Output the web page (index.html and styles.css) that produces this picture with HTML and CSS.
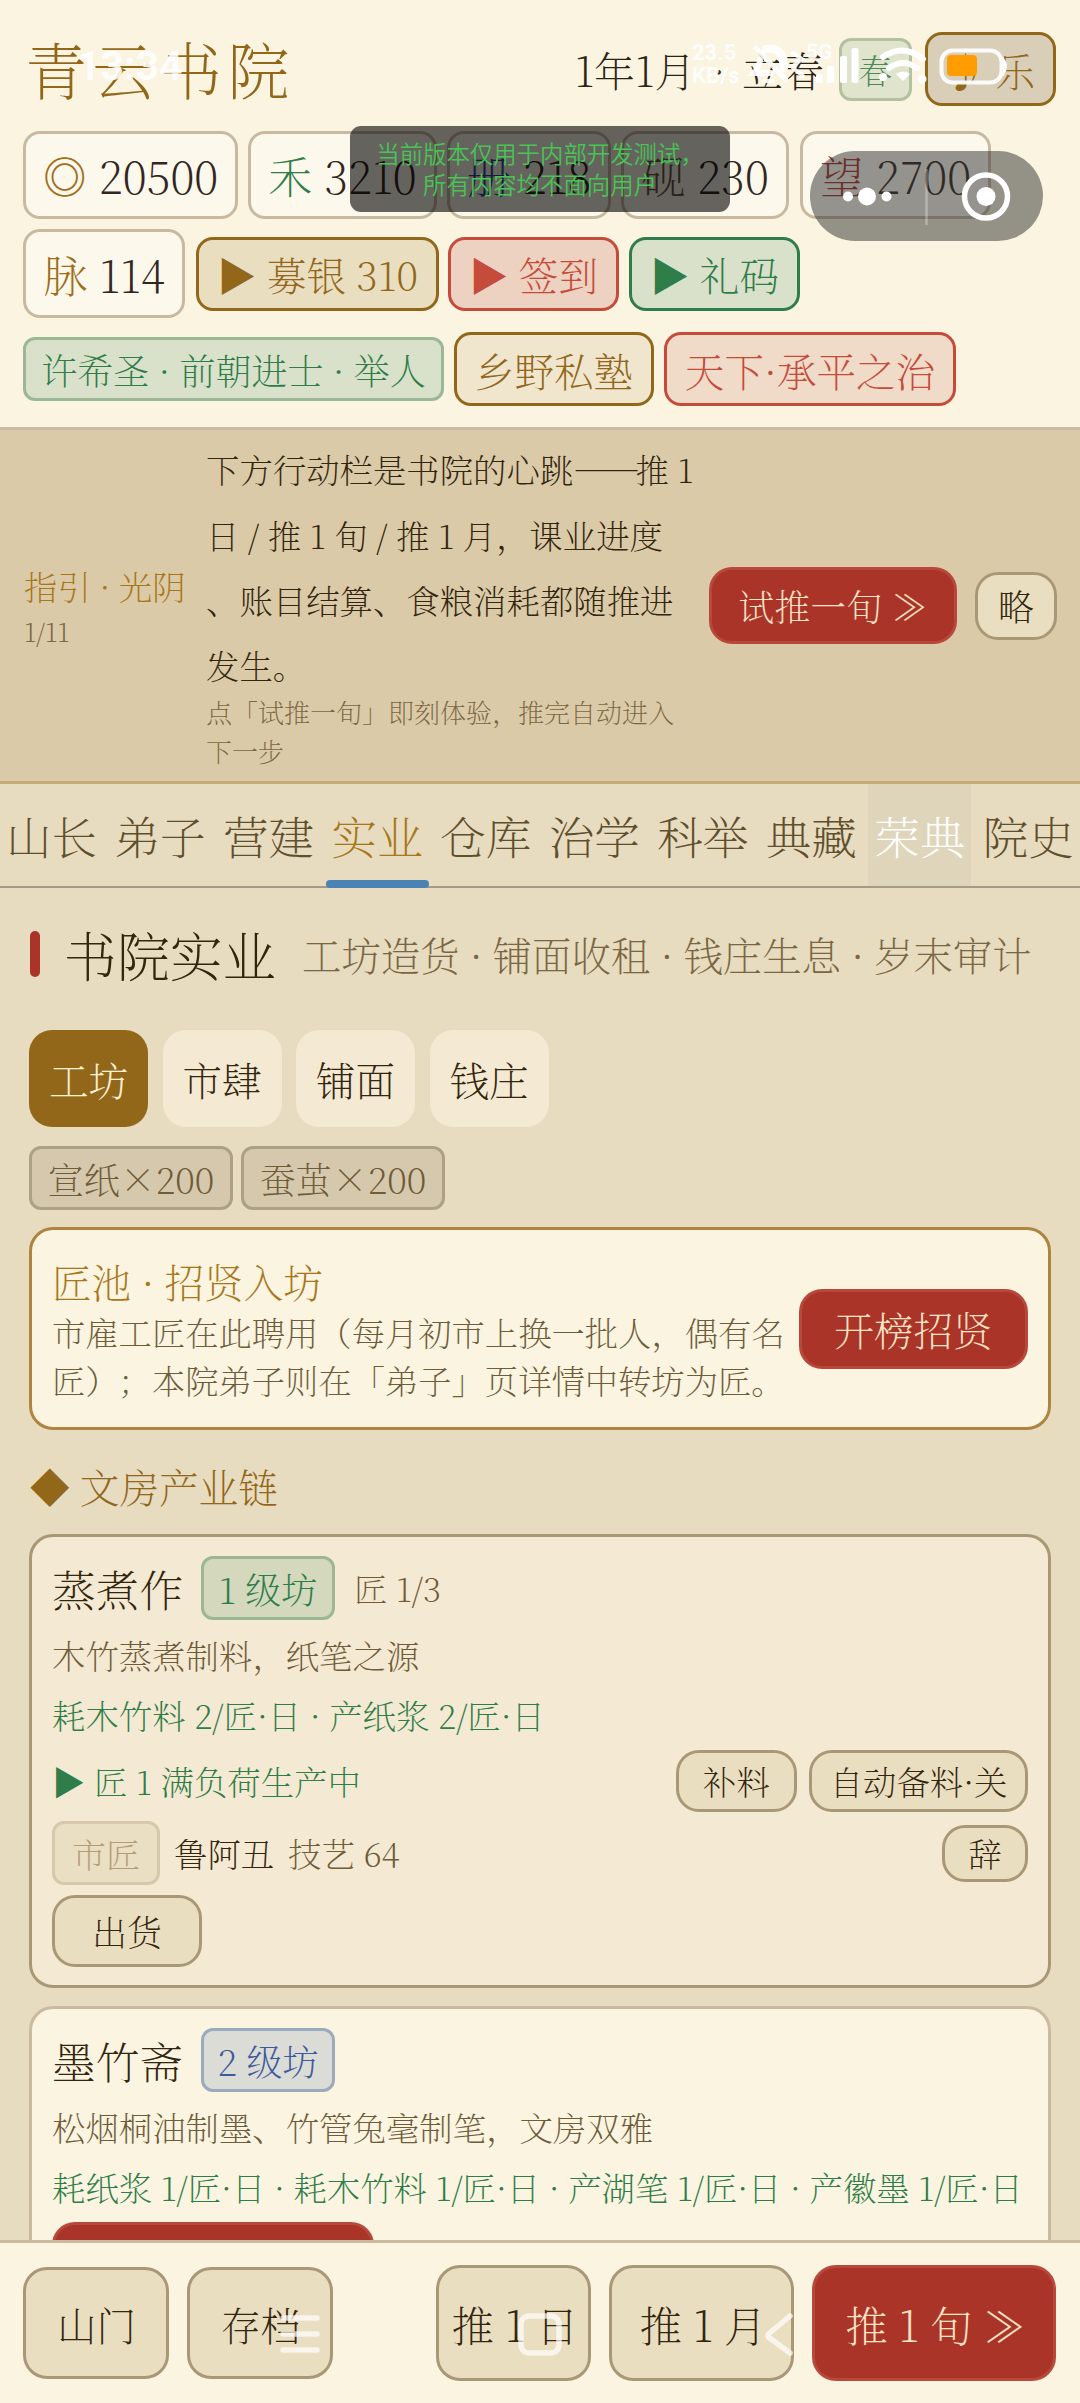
FILE: index.html
```html
<!DOCTYPE html>
<html lang="zh-CN">
<head>
<meta charset="utf-8">
<title>青云书院</title>
<link rel="stylesheet" href="styles.css">
</head>
<body>
<div class="app">
  <header class="header">
    <div class="title-row">
      <h1 class="title">青云书院</h1>
      <span class="date">1年1月 · 立春</span>
      <span class="season">春</span>
      <button class="action music">♪ 乐</button>
    </div>
    <div class="stats">
      <span class="stat stat-coin"><i class="c-gold">◎</i> 20500</span>
      <span class="stat stat-food"><i class="c-green">禾</i> 3210</span>
      <span class="stat stat-book"><i class="c-blue">册</i> 218</span>
      <span class="stat stat-ink"><i class="c-brown">砚</i> 230</span>
      <span class="stat stat-fame"><i class="c-red">望</i> 2700</span>
    </div>
    <div class="stats second">
      <span class="stat stat-vein"><i class="c-gold">脉</i> 114</span>
      <button class="action gold raise">▶ 募银 310</button>
      <button class="action red sign">▶ 签到</button>
      <button class="action green gift">▶ 礼码</button>
    </div>
    <div class="badges">
      <span class="tag tag-green master">许希圣 · 前朝进士 · 举人</span>
      <button class="action pale school">乡野私塾</button>
      <button class="action rose realm">天下·承平之治</button>
    </div>
  </header>

  <section class="guide">
    <div class="guide-label">指引 · 光阴<small>1/11</small></div>
    <div class="guide-text">
      <p>下方行动栏是书院的心跳<span class="dash">——</span>推 1<br>日 / 推 1 旬 / 推 1 月，课业进度<br>、账目结算、食粮消耗都随推进<br>发生。</p>
      <small>点「试推一旬」即刻体验，推完自动进入<br>下一步</small>
    </div>
    <button class="btn primary try">试推一旬 ≫</button>
    <button class="btn skip">略</button>
  </section>

  <nav class="tabs">
    <a>山长</a><a>弟子</a><a>营建</a><a class="active">实业</a><a>仓库</a><a>治学</a><a>科举</a><a>典藏</a><a class="pressed">荣典</a><a>院史</a>
  </nav>

  <main class="main">
    <div class="section-head"><span class="bar"></span><h2>书院实业</h2><span class="sub">工坊造货 · 铺面收租 · 钱庄生息 · 岁末审计</span></div>
    <div class="pills"><span class="pill on">工坊</span><span class="pill">市肆</span><span class="pill">铺面</span><span class="pill">钱庄</span></div>
    <div class="stock"><span class="tag tag-grey">宣纸×200</span><span class="tag tag-grey">蚕茧×200</span></div>

    <article class="card hire">
      <div class="hire-text">
        <h3>匠池 · 招贤入坊</h3>
        <p>市雇工匠在此聘用（每月初市上换一批人，偶有名<br>匠）；本院弟子则在「弟子」页详情中转坊为匠。</p>
      </div>
      <button class="btn primary post">开榜招贤</button>
    </article>

    <h3 class="chain">◆ 文房产业链</h3>

    <article class="card shop active-shop">
      <div class="shop-head"><h3>蒸煮作</h3><span class="tag tag-green level">1 级坊</span><span class="crew">匠 1/3</span></div>
      <p class="desc">木竹蒸煮制料，纸笔之源</p>
      <p class="flow">耗木竹料 2/匠·日 · 产纸浆 2/匠·日</p>
      <div class="row produce"><span class="flow-state">▶ 匠 1 满负荷生产中</span><button class="btn refill">补料</button><button class="btn auto">自动备料·关</button></div>
      <div class="row worker"><span class="tag tag-faint">市匠</span><span class="name">鲁阿丑</span><span class="skill">技艺 64</span><button class="btn dismiss">辞</button></div>
      <button class="btn ship">出货</button>
    </article>

    <article class="card shop">
      <div class="shop-head"><h3>墨竹斋</h3><span class="tag tag-blue level">2 级坊</span></div>
      <p class="desc">松烟桐油制墨、竹管兔毫制笔，文房双雅</p>
      <p class="flow">耗纸浆 1/匠·日 · 耗木竹料 1/匠·日 · 产湖笔 1/匠·日 · 产徽墨 1/匠·日</p>
      <button class="btn primary build"></button>
    </article>
  </main>

  <footer class="footer">
    <button class="btn gate">山门</button>
    <button class="btn gate save">存档</button>
    <button class="btn day">推 1 日</button>
    <button class="btn month">推 1 月</button>
    <button class="btn primary ten">推 1 旬 ≫</button>
  </footer>
</div>

<div class="notice">当前版本仅用于内部开发测试，<br>所有内容均不面向用户</div>

<svg class="capsule" width="233" height="90" viewBox="0 0 233 90">
  <rect width="233" height="90" rx="45" fill="#2d2d2d" fill-opacity=".5"/>
  <g fill="#fff"><circle cx="38" cy="45.500" r="5"/><circle cx="57" cy="45.500" r="9"/><circle cx="76.500" cy="45.500" r="5"/><circle cx="176" cy="45.500" r="9.500"/></g>
  <path d="M116.500 18v56" stroke="#fff" stroke-opacity=".3" stroke-width="2.500"/>
  <circle cx="176" cy="45.500" r="21.500" fill="none" stroke="#fff" stroke-width="5.500"/>
</svg>

<span class="clock">13:34</span>
<span class="speed">23.5<br>KB/s</span>
<svg class="status" width="380" height="60" viewBox="0 0 380 60">
  <g fill="none" stroke="#fff" stroke-opacity=".9" stroke-linecap="round">
    <path d="M76 8l30 32" stroke-width="5"/>
    <path d="M86 9q14-2 17 10l1 9" stroke-width="8"/>
    <path d="M80 20q-1 8-6 13h17" stroke-width="6"/>
    <path d="M84 41h9" stroke-width="4"/>
    <path d="M113 13l9 6-9 7M113 28l10 8" stroke-width="4"/>
  </g>
  <g fill="#fff"><rect x="136" y="34" width="7" height="9" rx="2"/><rect x="147" y="26" width="7" height="17" rx="2"/><rect x="160" y="16" width="7" height="27" rx="2"/><rect x="171.500" y="8" width="7" height="35" rx="2"/></g>
  <g fill="none" stroke="#fff" stroke-width="6" stroke-linecap="round"><path d="M203 17q20-14 40 2M209 28q14-10 28 0"/></g>
  <path d="M223 41l-7-7q7-5 14 0z" fill="#fff"/>
  <circle cx="203" cy="37" r="4" fill="#fff"/><circle cx="242" cy="39" r="4.500" fill="#fff"/>
  <rect x="261.500" y="10.500" width="60" height="32" rx="11" fill="none" stroke="#fff" stroke-opacity=".92" stroke-width="4"/>
  <path d="M324 20q4 6 0 13z" fill="#fff" stroke="#fff" stroke-width="2"/>
  <rect x="267" y="15" width="30" height="21" rx="4" fill="#ff9d00"/>
</svg>
<span class="net">5G</span>

<svg class="keys" width="540" height="60" viewBox="0 0 540 60">
  <g fill="none" stroke="#fff" stroke-opacity=".7" stroke-width="5.500" stroke-linecap="round" stroke-linejoin="round">
    <path d="M23 18h34M23 34h34M23 50h34"/>
    <rect x="261" y="16" width="38" height="37" rx="8"/>
    <path d="M530 16l-21 17.500q-2 2 0 4L530 53"/>
  </g>
</svg>
</body>
</html>
```
FILE: styles.css
```css
* { box-sizing: border-box; margin: 0; padding: 0; }

body {
  width: 1080px;
  height: 2403px;
  overflow: hidden;
  position: relative;
  background: #e7dbc0;
  color: #33260f;
  font-family: "Noto Serif CJK SC", "Noto Sans CJK SC", serif;
  font-weight: 200;
  text-spacing-trim: space-all;
}

i { font-style: normal; }
h1, h2, h3, small, button { font: inherit; color: inherit; }
button { background: none; border: 0; white-space: nowrap; }

.app { display: flex; flex-direction: column; height: 2403px; }

/* header */
.header {
  height: 430px;
  padding: 32px 23px 0;
  background: #faf4e1;
  border-bottom: 3px solid #c9baa0;
  white-space: nowrap;
}
.title-row { display: flex; align-items: center; height: 74px; padding-right: 1px; }
.title { font-size: 62px; letter-spacing: 5.5px; line-height: 74px; color: #93671a; padding-left: 2px; }
.date { margin-left: auto; font-size: 41px; word-spacing: 6px; color: #2b2416; }
.season {
  width: 73px; height: 63px; margin: 0 13px 0 15px;
  display: grid; place-items: center;
  font-size: 34px; color: #4d8a57;
  background: #e1e4cd; border: 3px solid #b3c1a0; border-radius: 12px;
}
.action {
  height: 74px;
  display: grid; place-items: center;
  font-size: 39.600px;
  border: 3px solid; border-radius: 17px;
}
.music { width: 131px; color: #93671a; background: #d9cfb8; }

.stats { display: flex; gap: 10px; height: 88px; margin-top: 25px; }
.stats.second { height: 89px; margin-top: 10px; align-items: center; }
.stat {
  height: 100%;
  display: flex; align-items: center; justify-content: center; gap: 12px;
  font-size: 44px; color: #33261f;
  background: #fcf8ec; border: 3px solid #c8b9a0; border-radius: 17px;
}
.stat-coin { width: 215px; }
.stat-food { width: 189px; }
.stat-book { width: 164px; }
.stat-ink { width: 168px; }
.stat-fame { width: 191px; margin-left: 1px; }
.stat-vein { width: 162px; }
.c-gold { color: #a06d18; }
.c-green { color: #2f7d48; }
.c-blue { color: #2e4a94; }
.c-brown { color: #6b5444; }
.c-red { color: #a8322a; }

.gold { color: #93671a; background: #e9dec0; }
.red { color: #c54b3b; background: #edd2c1; }
.green { color: #2f7d48; background: #dae1cb; }
.pale { color: #93671a; background: #f0e5cd; }
.rose { color: #c54b3b; background: #f0dac8; }
.raise { width: 243px; margin-left: 1px; }
.sign { width: 171px; margin-left: -1px; }
.gift { width: 171px; }

.badges { display: flex; align-items: center; gap: 10px; height: 74px; margin-top: 14px; }
.school { width: 200px; }
.realm { width: 292px; }
.tag {
  display: grid; place-items: center;
  height: 64px;
  font-size: 36px;
  border: 3px solid; border-radius: 12px;
  white-space: nowrap;
}
.tag-green { color: #2f7d48; background: #dae1cb; border-color: #9bb796; }
.master { width: 421px; font-size: 36px; }

/* tutorial strip */
.guide {
  height: 354px;
  display: flex; align-items: center;
  padding: 0 23px;
  background: #dbcaa8;
  border-bottom: 3px solid #c4ab79;
  white-space: nowrap;
}
.guide-label { width: 183px; padding: 2px 0 0 1px; font-size: 33.400px; line-height: 48px; color: #a87719; }
.guide-label small { display: block; font-size: 26px; line-height: 42px; color: #7a6742; }
.guide-text { width: 503px; padding-bottom: 4px; font-size: 33.400px; line-height: 65.300px; }
.guide-text small { display: block; margin-top: -7px; font-size: 26px; line-height: 39px; color: #7a6742; }
.dash { letter-spacing: -4.700px; }

.btn {
  display: grid; place-items: center;
  background: #eadec1;
  border: 3px solid #a99876;
  border-radius: 23px;
}
.primary { background: #ab3429; border-color: #b8483c; color: #fbe3c6; }
.try { width: 248px; height: 77px; font-size: 36px; }
.skip { width: 82px; height: 68px; margin-left: 18px; font-size: 36px; }

/* tabs */
.tabs {
  height: 104px;
  display: flex; justify-content: space-between;
  border-bottom: 2px solid #a59a85;
}
.tabs a {
  position: relative;
  width: 103px;
  line-height: 104px;
  text-align: center;
  font-size: 45.600px;
  color: #5f4f2b;
  white-space: nowrap;
}
.tabs .active { color: #a87719; }
.tabs .active::after {
  content: "";
  position: absolute; left: 0; right: 0; bottom: -2px;
  height: 8px;
  background: #4b82b4; border-radius: 4px;
}
.tabs .pressed { color: #fff; background: #dfd5bb; }

/* main */
.main { height: 1352px; overflow: hidden; padding: 0 29px; }
.section-head { display: flex; align-items: center; height: 76px; margin-top: 28px; white-space: nowrap; }
.bar { width: 10px; height: 46px; margin: 0 24px 0 1px; border-radius: 5px; background: #ab3429; }
.section-head h2 { width: 238px; font-size: 52.900px; }
.sub { font-size: 39.400px; color: #7a6742; }

.pills { display: flex; gap: 14.500px; margin-top: 38px; }
.pill {
  width: 119px; height: 97px;
  display: grid; place-items: center;
  font-size: 39.600px;
  background: #f4e9d2; border-radius: 23px;
}
.pill.on { background: #93671a; color: #fdf1d6; }

.stock { display: flex; gap: 8px; margin-top: 19px; }
.tag-grey { width: 204px; color: #6f5c39; background: #d6c8ac; border-color: #ada083; }

.card { border: 3px solid #c9baa0; border-radius: 24px; background: #faf4e1; }
.hire {
  display: flex; align-items: center; justify-content: space-between;
  height: 203px; margin-top: 17px; padding: 0 20px;
  border-color: #ad8541;
}
.hire-text { white-space: nowrap; }
.hire h3 { font-size: 39.600px; line-height: 54px; color: #a87719; }
.hire p { font-size: 33.300px; line-height: 48px; color: #6f5c39; }
.post { width: 229px; height: 80px; font-size: 39.600px; }

.chain { height: 104px; line-height: 112px; padding-left: 1px; font-size: 39.600px; color: #93671a; }

.shop { height: 454px; margin-bottom: 18px; padding: 19px 20px 0; white-space: nowrap; }
.active-shop { background: #f4e9d2; border-color: #a99876; }
.shop-head { display: flex; align-items: center; height: 64px; }
.shop-head h3 { width: 149px; font-size: 43.700px; }
.level { width: 134px; }
.active-shop .tag-green { background: #d4d8bd; }
.tag-blue { color: #3e5a9e; background: #dcdcd6; border-color: #9aabbd; }
.crew { margin-left: 19px; font-size: 33.400px; color: #6f5c39; }
.desc { margin-top: 7px; font-size: 33.400px; line-height: 56px; color: #6f5c39; }
.flow { margin-top: 3px; font-size: 33.400px; line-height: 58px; color: #2f7d48; }
.row { display: flex; align-items: center; font-size: 33.400px; }
.produce { height: 64px; margin-top: 5px; }
.flow-state { flex: 1; color: #2f7d48; }
.refill { width: 121px; height: 62px; margin-right: 12px; font-size: 33.400px; }
.auto { width: 219px; height: 62px; font-size: 33.400px; }
.worker { height: 64px; margin-top: 8px; }
.tag-faint { width: 108px; font-size: 34px; color: #b39d78; background: #eadec3; border-color: #d6c8aa; }
.name { margin-left: 14px; width: 114px; }
.skill { flex: 1; color: #6f5c39; }
.dismiss { width: 86px; height: 57px; font-size: 33.400px; }
.ship { width: 150px; height: 72px; margin-top: 10px; font-size: 35px; }
.build { width: 322px; height: 72px; margin-top: 6px; }

/* footer */
.footer {
  flex: 1;
  display: flex; align-items: flex-start;
  padding: 22px 23px 0;
  background: #faf4e1;
  border-top: 3px solid #c9baa0;
}
.footer .btn { height: 116px; padding-left: 3px; font-size: 42.500px; border-radius: 24px; }
.footer .gate { width: 146px; height: 112px; margin: 2px 18px 0 0; padding-left: 1px; font-size: 39.600px; }
.footer .day { width: 155px; margin: 0 18px 0 85px; }
.footer .month { width: 185px; margin-right: 18px; }
.footer .ten { width: 244px; }

/* overlays drawn by the host on top of the page */
.notice {
  position: absolute; left: 350px; top: 126px;
  width: 380px; height: 86px; padding: 12px 0;
  background: rgba(0, 0, 0, .6); border-radius: 11px;
  color: #48c455;
  font: 350 23.400px/31px "Noto Sans CJK SC", sans-serif;
  text-align: center; white-space: nowrap;
}
.capsule { position: absolute; left: 810px; top: 151px; }
.status { position: absolute; left: 680px; top: 40px; }
.keys { position: absolute; left: 260px; top: 2300px; }
.clock, .speed, .net { position: absolute; color: rgba(255, 255, 255, .88); font-family: Roboto, sans-serif; font-weight: 700; white-space: nowrap; }
.clock { left: 77px; top: 43px; font-size: 41px; line-height: 46px; }
.speed { left: 692px; top: 41px; font-size: 22px; line-height: 23px; }
.net { left: 806px; top: 40px; font-size: 21px; line-height: 24px; }
```
